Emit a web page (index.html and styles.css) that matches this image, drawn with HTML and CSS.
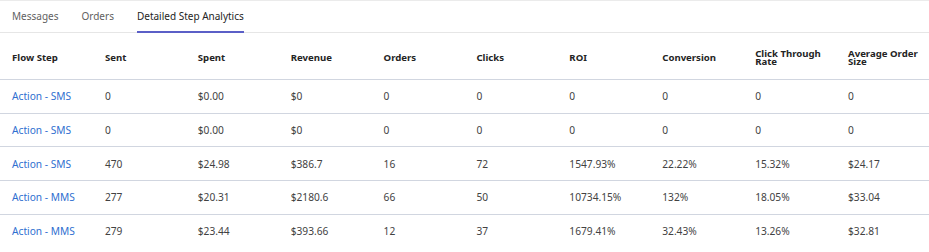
FILE: index.html
```html
<!DOCTYPE html>
<html>
<head>
<meta charset="utf-8">
<link rel="stylesheet" href="styles.css">
</head>
<body>
<div class="page">
  <nav class="tabs">
    <span class="tab">Messages</span>
    <span class="tab">Orders</span>
    <span class="tab active">Detailed Step Analytics</span>
  </nav>
  <table class="grid">
    <thead>
      <tr>
        <th>Flow Step</th><th>Sent</th><th>Spent</th><th>Revenue</th><th>Orders</th><th>Clicks</th><th>ROI</th><th>Conversion</th><th>Click Through Rate</th><th>Average Order Size</th>
      </tr>
    </thead>
    <tbody>
      <tr><td><span class="link">Action - SMS</span></td><td>0</td><td>$0.00</td><td>$0</td><td>0</td><td>0</td><td>0</td><td>0</td><td>0</td><td>0</td></tr>
      <tr><td><span class="link">Action - SMS</span></td><td>0</td><td>$0.00</td><td>$0</td><td>0</td><td>0</td><td>0</td><td>0</td><td>0</td><td>0</td></tr>
      <tr><td><span class="link">Action - SMS</span></td><td>470</td><td>$24.98</td><td>$386.7</td><td>16</td><td>72</td><td>1547.93%</td><td>22.22%</td><td>15.32%</td><td>$24.17</td></tr>
      <tr><td><span class="link">Action - MMS</span></td><td>277</td><td>$20.31</td><td>$2180.6</td><td>66</td><td>50</td><td>10734.15%</td><td>132%</td><td>18.05%</td><td>$33.04</td></tr>
      <tr><td><span class="link">Action - MMS</span></td><td>279</td><td>$23.44</td><td>$393.66</td><td>12</td><td>37</td><td>1679.41%</td><td>32.43%</td><td>13.26%</td><td>$32.81</td></tr>
    </tbody>
  </table>
</div>
</body>
</html>
```
FILE: styles.css
```css
html, body {
  margin: 0;
  padding: 0;
  background: #ffffff;
}
.page {
  font-family: "Noto Sans", "Open Sans", sans-serif;
  font-size: 10.2px;
  color: #424242;
  border-top: 1px solid #ebebeb;
}
.tabs {
  display: flex;
  padding-left: 12px;
  border-bottom: 1px solid #e6e6e6;
  height: 32px;
  box-sizing: border-box;
}
.tab {
  font-size: 10px;
  color: #616161;
  padding: 8px 0 0;
  margin-right: 23px;
  box-sizing: border-box;
  height: 32px;
  margin-bottom: -1px;
  border-bottom: 2px solid transparent;
}
.tab.active {
  color: #242424;
  border-bottom-color: #5b5fc7;
}
.grid {
  width: 100%;
  table-layout: fixed;
  border-collapse: collapse;
}
.grid th {
  text-align: left;
  font-weight: 700;
  color: #242424;
  font-size: 9.6px;
  line-height: 8px;
  height: 43px;
  padding: 3px 6px 0 12px;
  border-bottom: 1px solid #d1d6e0;
  vertical-align: middle;
}
.grid td {
  height: 32.7px;
  padding: 0 12px;
  border-bottom: 1px solid #d1d6e0;
  vertical-align: middle;
  white-space: nowrap;
}
.grid tbody tr:last-child td {
  border-bottom: none;
}
.link {
  color: #2f6fd0;
}
```
